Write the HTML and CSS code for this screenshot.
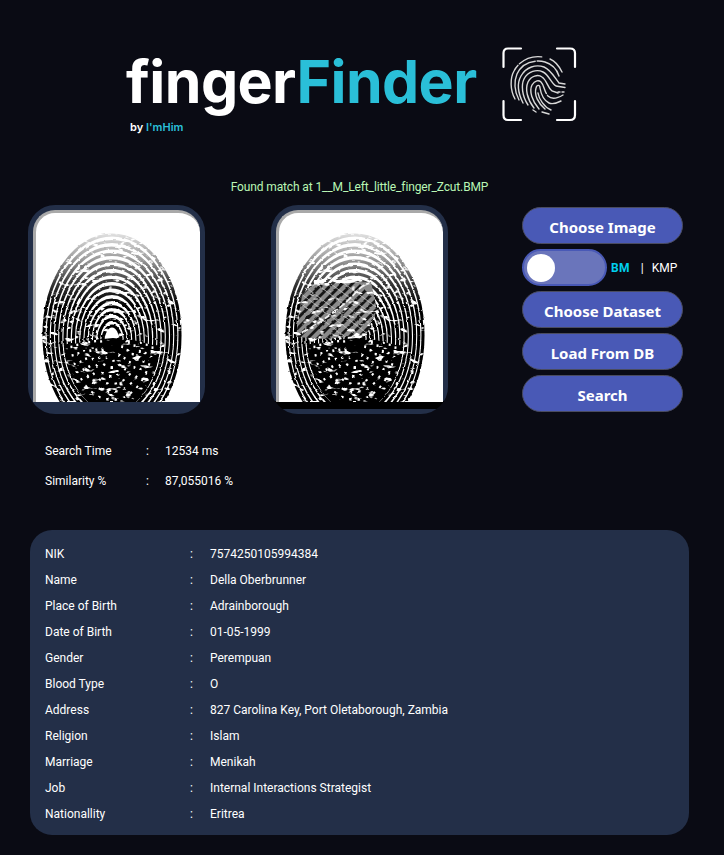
FILE: index.html
```html
<!DOCTYPE html>
<html lang="en">
<head>
<meta charset="utf-8">
<title>fingerFinder</title>
<link rel="stylesheet" href="styles.css">
</head>
<body>
<svg class="defs" width="0" height="0" aria-hidden="true">
  <defs>
    <linearGradient id="ridgeInk" gradientUnits="userSpaceOnUse" x1="0" y1="22" x2="0" y2="115">
      <stop offset="0" stop-color="#e4e4e4"/>
      <stop offset="0.3" stop-color="#9a9a9a"/>
      <stop offset="0.55" stop-color="#383838"/>
      <stop offset="0.8" stop-color="#000"/>
      <stop offset="1" stop-color="#000"/>
    </linearGradient>
    <filter id="soft" x="-5%" y="-5%" width="110%" height="110%" color-interpolation-filters="sRGB">
      <feTurbulence type="fractalNoise" baseFrequency="0.12 0.22" numOctaves="2" seed="7" result="noise"/>
      <feDisplacementMap in="SourceGraphic" in2="noise" scale="2.6" xChannelSelector="R" yChannelSelector="G" result="warped"/>
      <feColorMatrix in="noise" type="matrix" values="0 0 0 0 0  0 0 0 0 0  0 0 0 0 0  8 0 0 0 -2.1" result="holes"/>
      <feComposite in="warped" in2="holes" operator="in" result="broken"/>
      <feGaussianBlur in="broken" stdDeviation="0.6"/>
    </filter>
    <clipPath id="upperPart"><rect x="0" y="0" width="167" height="142"/></clipPath>
    <clipPath id="lowerPart"><path d="M0 136L40 134L60 130L80 128L100 130L120 135L167 137V192H0Z"/></clipPath>
    <clipPath id="patch"><path d="M37 74L95 72L101 100L90 125L50 129L20 127L26 85Z"/></clipPath>
    <symbol id="ridges" viewBox="0 0 167 192">
      <g class="ridge-set" stroke="url(#ridgeInk)">
        <ellipse cx="79" cy="125" rx="68" ry="100"/>
        <ellipse cx="79" cy="125.500" rx="63.800" ry="94"/>
        <ellipse cx="79" cy="126" rx="59.600" ry="88"/>
        <ellipse cx="79" cy="126.500" rx="55.400" ry="82"/>
        <ellipse cx="79" cy="127" rx="51.200" ry="76"/>
        <ellipse cx="79" cy="127.500" rx="47" ry="70"/>
      </g>
      <g class="ridge-set" stroke="url(#ridgeInk)" clip-path="url(#upperPart)">
        <ellipse cx="79" cy="128" rx="42.800" ry="64"/>
        <ellipse cx="79" cy="128.500" rx="38.600" ry="58"/>
        <ellipse cx="79" cy="129" rx="34.400" ry="52"/>
        <ellipse cx="79" cy="129.500" rx="30.200" ry="46"/>
        <ellipse cx="79" cy="130" rx="26" ry="40"/>
        <ellipse cx="79" cy="130.500" rx="21.800" ry="34"/>
        <ellipse cx="79" cy="131" rx="17.600" ry="28"/>
        <ellipse cx="79" cy="131.500" rx="13.400" ry="22"/>
        <ellipse cx="79" cy="132" rx="9.200" ry="16"/>
      </g>
      <g clip-path="url(#lowerPart)">
        <ellipse class="blob" cx="79" cy="128" rx="48" ry="74"/>
        <g class="speckle">
          <ellipse cx="79" cy="128" rx="41" ry="62"/>
          <ellipse cx="79" cy="128" rx="35" ry="54" stroke-dashoffset="3"/>
          <ellipse cx="79" cy="128" rx="29" ry="46" stroke-dashoffset="5"/>
          <ellipse cx="79" cy="128" rx="23" ry="38" stroke-dashoffset="2"/>
          <ellipse cx="79" cy="128" rx="17" ry="30" stroke-dashoffset="6"/>
          <ellipse cx="79" cy="128" rx="11" ry="23" stroke-dashoffset="1"/>
        </g>
      </g>
    </symbol>
  </defs>
</svg>

<header class="brand">
  <div class="brand-text">
    <h1 class="title">finger<span class="accent">Finder</span></h1>
    <p class="byline">by <span class="accent">I'mHim</span></p>
  </div>
  <svg class="logo" viewBox="0 0 75 75" aria-label="fingerprint logo">
    <g class="bracket">
      <path d="M1.500 20V6Q1.500 1.500 6 1.500H19"/>
      <path d="M55 1.500H68Q73 1.500 73 6V20"/>
      <path d="M1.500 54V68Q1.500 73 6 73H19"/>
      <path d="M55 73H68Q73 73 73 68V54"/>
    </g>
    <g class="print">
      <path d="M13 52C8 43 8 31 12 24C18 12 33 7 45 11" stroke-dasharray="36 2 24"/>
      <path d="M48 12C53 14 57 19 60 25"/>
      <path d="M17 53C12 44 12 34 15 27C20 16 33 12 43 15C50 17 55 23 57 29" stroke-dasharray="50 2 30"/>
      <path d="M21 56C16 46 15 36 19 29C24 20 34 17 42 20C49 23 53 31 57 36L63 37"/>
      <path d="M26 58C20 49 19 38 22 32C26 24 35 22 41 25C47 28 49 36 54 39L63 40.500"/>
      <path d="M32 61C25 52 23 42 26 35C29 29 36 27 40 30C45 33 45 40 50 44L56 46"/>
      <path d="M37 62C30 54 27 44 30 38C33 33 37 33 39 35C42 38 42 44 46 49C50 53 56 51 61 48" stroke-dasharray="50 2 30"/>
      <path d="M43 62C36 56 32 48 34 41C35 37 38 38 38 41C39 47 41 53 47 56C51 58 55 56 59 54"/>
      <path d="M49 63C42 60 37 52 36 46"/>
      <path d="M31 63L34 65M40 65L47 67"/>
      <path d="M60 45H62M56 45H58"/>
    </g>
  </svg>
</header>

<p class="status">Found match at 1__M_Left_little_finger_Zcut.BMP</p>

<section class="workspace">
  <figure class="frame frame-source">
    <div class="scan">
      <svg class="print-art" viewBox="0 0 167 192"><use href="#ridges"/></svg>
    </div>
  </figure>
  <figure class="frame frame-match">
    <div class="scan">
      <svg class="print-art" viewBox="0 0 167 192">
        <use href="#ridges"/>
        <g clip-path="url(#patch)">
          <rect x="15" y="66" width="90" height="66" class="patch-bg"/>
          <path class="hatch" d="M-10 100L50 40M-5 105L55 45M0 110L60 50M5 115L65 55M10 120L70 60M15 125L75 65M20 130L80 70M25 135L85 75M30 140L90 80M35 145L95 85M40 150L100 90M45 155L105 95M50 160L110 100M55 165L115 105"/>
          <path class="hatch-cross" d="M20 70L100 130M20 80L100 140M20 90L90 142M30 66L110 126M44 66L115 118M58 66L115 108"/>
          <path class="streak" d="M26 123C48 110 66 98 82 80C86 76 90 74 94 73"/>
        </g>
        <path class="streak-top" d="M38 73L50 70M57 70C66 73 76 72 84 68"/>
      </svg>
    </div>
  </figure>
  <aside class="controls">
    <button class="pill" type="button">Choose Image</button>
    <div class="algo">
      <span class="toggle"><span class="knob"></span></span>
      <span class="algo-labels"><b class="algo-on">BM</b><span class="algo-sep">|</span><span>KMP</span></span>
    </div>
    <button class="pill" type="button">Choose Dataset</button>
    <button class="pill" type="button">Load From DB</button>
    <button class="pill" type="button">Search</button>
  </aside>
</section>

<section class="stats">
  <div class="stat"><span class="stat-key">Search Time</span><span class="stat-colon">:</span><span>12534 ms</span></div>
  <div class="stat"><span class="stat-key">Similarity %</span><span class="stat-colon">:</span><span>87,055016 %</span></div>
</section>

<section class="bio">
  <div class="bio-row"><span class="bio-key">NIK</span><span class="bio-colon">:</span><span>7574250105994384</span></div>
  <div class="bio-row"><span class="bio-key">Name</span><span class="bio-colon">:</span><span>Della Oberbrunner</span></div>
  <div class="bio-row"><span class="bio-key">Place of Birth</span><span class="bio-colon">:</span><span>Adrainborough</span></div>
  <div class="bio-row"><span class="bio-key">Date of Birth</span><span class="bio-colon">:</span><span>01-05-1999</span></div>
  <div class="bio-row"><span class="bio-key">Gender</span><span class="bio-colon">:</span><span>Perempuan</span></div>
  <div class="bio-row"><span class="bio-key">Blood Type</span><span class="bio-colon">:</span><span>O</span></div>
  <div class="bio-row"><span class="bio-key">Address</span><span class="bio-colon">:</span><span>827 Carolina Key, Port Oletaborough, Zambia</span></div>
  <div class="bio-row"><span class="bio-key">Religion</span><span class="bio-colon">:</span><span>Islam</span></div>
  <div class="bio-row"><span class="bio-key">Marriage</span><span class="bio-colon">:</span><span>Menikah</span></div>
  <div class="bio-row"><span class="bio-key">Job</span><span class="bio-colon">:</span><span>Internal Interactions Strategist</span></div>
  <div class="bio-row"><span class="bio-key">Nationallity</span><span class="bio-colon">:</span><span>Eritrea</span></div>
</section>
</body>
</html>
```
FILE: styles.css
```css
* { box-sizing: border-box; }
html, body { margin: 0; padding: 0; }
body {
  width: 724px;
  height: 855px;
  overflow: hidden;
  background: #0a0b14;
  color: #fff;
  font-family: Roboto, "Noto Sans", sans-serif;
  font-size: 12px;
}
.defs { position: absolute; }

.brand {
  display: flex;
  align-items: flex-start;
  height: 180px;
  padding: 47px 0 0 126px;
}
.brand-text { width: 376px; padding-top: 2px; }
.title {
  margin: 0;
  font-family: Inter, sans-serif;
  font-size: 59px;
  font-weight: 700;
  line-height: 66px;
  letter-spacing: -0.6px;
}
.accent { color: #2abfd8; }
.byline {
  margin: 5px 0 0 4px;
  font-family: Inter, sans-serif;
  font-size: 11px;
  font-weight: 600;
  line-height: 14px;
}
.logo { width: 75px; height: 75px; }
.bracket path { fill: none; stroke: #fff; stroke-width: 2.2; stroke-linecap: round; }
.print path { fill: none; stroke: #d8d8d8; stroke-width: 1.4; stroke-linecap: round; }

.status {
  margin: 0;
  height: 25px;
  padding-right: 5px;
  text-align: center;
  line-height: 15px;
  letter-spacing: -0.13px;
  color: #b9f7b4;
}

.workspace {
  display: flex;
  align-items: flex-start;
  padding-left: 28px;
}
.frame {
  margin: 0;
  width: 177px;
  height: 209px;
  padding: 5px 5px 0;
  border-radius: 27px;
  background: #232f48;
  overflow: hidden;
}
.frame-match {
  margin-left: 66px;
  background:
    linear-gradient(#000, #000) 0 196px / 100% 8px no-repeat,
    #232f48;
}
.scan {
  width: 167px;
  height: 192px;
  background: #fff;
  border-radius: 22px 22px 0 0;
  border-top: 3px solid #a9a9a9;
  border-left: 3px solid #a9a9a9;
  overflow: hidden;
}
.print-art { display: block; width: 167px; height: 192px; margin: -3px 0 0 -3px; filter: url(#soft); }
.ridge-set ellipse { fill: none; stroke-width: 3.1; }
.blob { fill: #000; }
.speckle ellipse { fill: none; stroke: #fff; stroke-width: 2; stroke-dasharray: 2.5 6; }
.patch-bg { fill: #8a8a8a; }
.hatch { fill: none; stroke: #161616; stroke-width: 2.8; }
.hatch-cross { fill: none; stroke: #cfcfcf; stroke-width: 0.7; }
.streak { fill: none; stroke: #efefef; stroke-width: 1.8; stroke-dasharray: 7 2; }
.streak-top { fill: none; stroke: #fff; stroke-width: 3.4; }

.controls {
  display: flex;
  flex-direction: column;
  gap: 5px;
  margin-left: 74px;
  margin-top: 2px;
  width: 161px;
}
.pill {
  height: 37px;
  border: 1.500px solid #4a4c60;
  border-radius: 19px;
  background: #4959b6;
  color: #fff;
  font-family: "Noto Sans", sans-serif;
  font-size: 15px;
  font-weight: 700;
  padding: 2px 0 0;
}
.algo { display: flex; align-items: center; height: 37px; }
.toggle {
  display: flex;
  align-items: center;
  width: 85px;
  height: 37px;
  padding-left: 3px;
  border: 2.500px solid #4959b6;
  border-radius: 19px;
  background: #6a75bb;
}
.knob { width: 28px; height: 28px; border-radius: 50%; background: #fff; }
.algo-labels { display: flex; align-items: center; margin-left: 4px; font-size: 12px; }
.algo-on { color: #00cfee; font-weight: 700; letter-spacing: 0.3px; }
.algo-sep { margin: 0 8px 0 11px; }

.stats { padding: 22px 0 0 45px; height: 116px; }
.stat { display: flex; height: 30px; line-height: 30px; }
.stat-key { width: 101px; }
.stat-colon { width: 19px; }

.bio {
  margin-left: 30px;
  width: 659px;
  height: 305px;
  padding: 11px 15px;
  border-radius: 22px;
  background: #232f48;
}
.bio-row { display: flex; height: 26px; line-height: 26px; }
.bio-key { width: 145px; }
.bio-colon { width: 20px; }
```
